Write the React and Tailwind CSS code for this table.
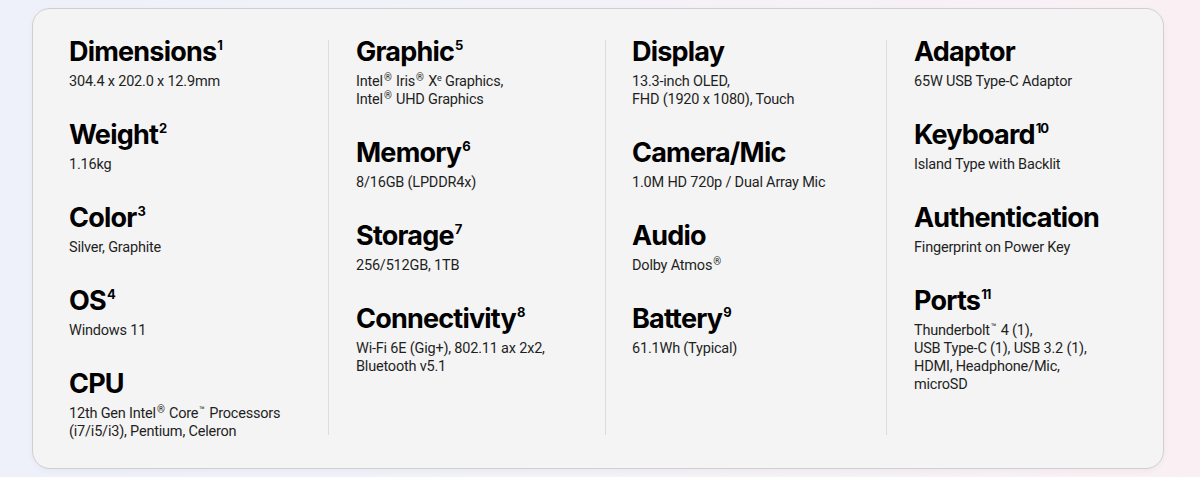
import React from "react";

const R = () => <span className="text-[10px] leading-[0] relative top-[-5px] mx-[1px]">®</span>;
const TM = () => <span className="text-[9px] leading-[0] relative top-[-5px] mx-[1px]">™</span>;

const columns = [
  [
    { t: "Dimensions", s: "1", b: ["304.4 x 202.0 x 12.9mm"] },
    { t: "Weight", s: "2", b: ["1.16kg"] },
    { t: "Color", s: "3", b: ["Silver, Graphite"] },
    { t: "OS", s: "4", b: ["Windows 11"] },
    { t: "CPU", s: "", b: [<>12th Gen Intel<R /> Core<TM /> Processors</>, "(i7/i5/i3), Pentium, Celeron"] },
  ],
  [
    { t: "Graphic", s: "5", b: [<>Intel<R /> Iris<R /> X<span className="text-[9px] leading-[0] relative top-[-5px]">e</span> Graphics,</>, <>Intel<R /> UHD Graphics</>] },
    { t: "Memory", s: "6", b: ["8/16GB (LPDDR4x)"] },
    { t: "Storage", s: "7", b: ["256/512GB, 1TB"] },
    { t: "Connectivity", s: "8", b: ["Wi-Fi 6E (Gig+), 802.11 ax 2x2,", "Bluetooth v5.1"] },
  ],
  [
    { t: "Display", s: "", b: ["13.3-inch OLED,", "FHD (1920 x 1080), Touch"] },
    { t: "Camera/Mic", s: "", b: ["1.0M HD 720p / Dual Array Mic"] },
    { t: "Audio", s: "", b: [<>Dolby Atmos<R /></>] },
    { t: "Battery", s: "9", b: ["61.1Wh (Typical)"] },
  ],
  [
    { t: "Adaptor", s: "", b: ["65W USB Type-C Adaptor"] },
    { t: "Keyboard", s: "10", b: ["Island Type with Backlit"] },
    { t: "Authentication", s: "", b: ["Fingerprint on Power Key"] },
    { t: "Ports", s: "11", b: [<>Thunderbolt<TM /> 4 (1),</>, "USB Type-C (1), USB 3.2 (1),", "HDMI, Headphone/Mic,", "microSD"] },
  ],
];

function Spec({ item }) {
  return (
    <div>
      <div className="text-[27px] leading-[30px] font-bold text-black tracking-[-0.8px] whitespace-nowrap" style={{ fontFamily: "Inter, sans-serif" }}>
        {item.t}
        {item.s && (
          <sup className="text-[13px] font-bold top-[-11px] ml-[1px] tracking-[-1px]">{item.s}</sup>
        )}
      </div>
      <div className="mt-[6px] text-[14.5px] leading-[18px] tracking-[-0.2px] text-[#1f1f1f] whitespace-nowrap" style={{ fontFamily: "Roboto, sans-serif" }}>
        {item.b.map((l, i) => (
          <div key={i} className="h-[18px]">{l}</div>
        ))}
      </div>
    </div>
  );
}

function Col({ items, className }) {
  return (
    <div className={"flex flex-col gap-[29px] " + className}>
      {items.map((it, i) => (
        <Spec key={i} item={it} />
      ))}
    </div>
  );
}

export default function App() {
  return (
    <div className="w-[1200px] h-[477px] bg-gradient-to-r from-[#eef0fa] via-[#f3f2f8] to-[#faf0f3] pt-[8px] pl-[32px]">
      <div className="w-[1132px] h-[461px] rounded-[18px] border border-[#cfcfd2] bg-[#f4f4f4] shadow-[0_2px_6px_rgba(0,0,0,0.04)] pt-[28px] pl-[36px]">
        <div className="flex items-start">
          <Col items={columns[0]} className="w-[259px]" />
          <div className="w-px h-[395px] mt-[3px] bg-[#dcdcdc]" />
          <Col items={columns[1]} className="w-[276px] pl-[27px]" />
          <div className="w-px h-[395px] mt-[3px] bg-[#dcdcdc]" />
          <Col items={columns[2]} className="w-[280px] pl-[26px]" />
          <div className="w-px h-[395px] mt-[3px] bg-[#dcdcdc]" />
          <Col items={columns[3]} className="pl-[27px]" />
        </div>
      </div>
    </div>
  );
}
